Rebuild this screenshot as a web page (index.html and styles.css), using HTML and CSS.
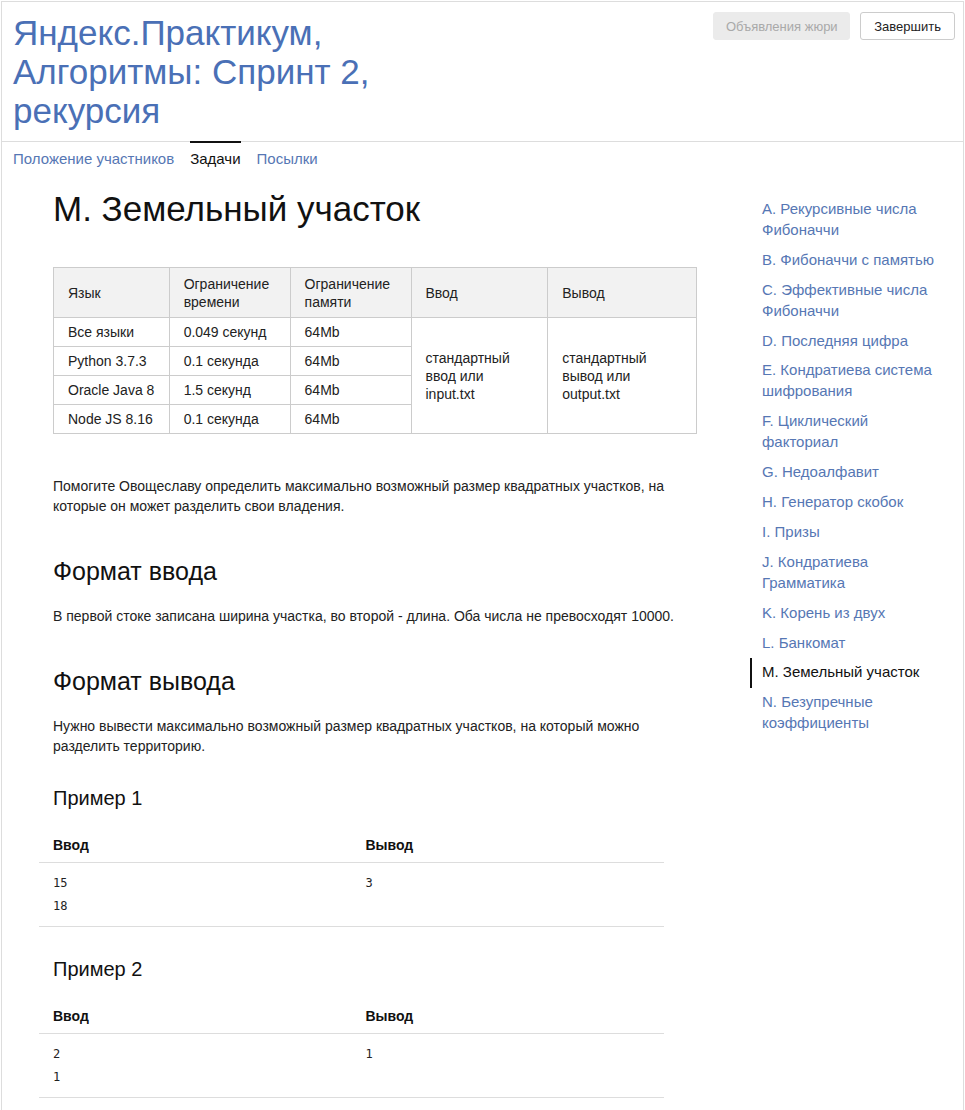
FILE: index.html
```html
<!DOCTYPE html>
<html lang="ru">
<head>
<meta charset="utf-8">
<title>М. Земельный участок</title>
<link rel="stylesheet" href="styles.css">
</head>
<body>
<div class="page">
  <header class="header">
    <h1 class="contest-title">Яндекс.Практикум, Алгоритмы: Спринт 2, рекурсия</h1>
    <div class="header-actions">
      <button class="btn btn-disabled" disabled>Объявления жюри</button>
      <button class="btn">Завершить</button>
    </div>
  </header>
  <nav class="tabs">
    <a class="tab">Положение участников</a>
    <a class="tab tab-active">Задачи</a>
    <a class="tab">Посылки</a>
  </nav>
  <div class="content">
    <main class="problem">
      <h1 class="problem-title">M. Земельный участок</h1>
      <table class="limits">
        <thead>
          <tr>
            <th class="c1">Язык</th>
            <th class="c2">Ограничение времени</th>
            <th class="c3">Ограничение памяти</th>
            <th class="c4">Ввод</th>
            <th class="c5">Вывод</th>
          </tr>
        </thead>
        <tbody>
          <tr>
            <td>Все языки</td>
            <td>0.049 секунд</td>
            <td>64Mb</td>
            <td rowspan="4">стандартный ввод или input.txt</td>
            <td rowspan="4">стандартный вывод или output.txt</td>
          </tr>
          <tr><td>Python 3.7.3</td><td>0.1 секунда</td><td>64Mb</td></tr>
          <tr><td>Oracle Java 8</td><td>1.5 секунд</td><td>64Mb</td></tr>
          <tr><td>Node JS 8.16</td><td>0.1 секунда</td><td>64Mb</td></tr>
        </tbody>
      </table>
      <p class="legend">Помогите Овощеславу определить максимально возможный размер квадратных участков, на которые он может разделить свои владения.</p>
      <h2 class="section-title">Формат ввода</h2>
      <p class="section-text">В первой стоке записана ширина участка, во второй - длина. Оба числа не превосходят 10000.</p>
      <h2 class="section-title">Формат вывода</h2>
      <p class="section-text">Нужно вывести максимально возможный размер квадратных участков, на который можно разделить территорию.</p>

      <h3 class="sample-title">Пример 1</h3>
      <table class="sample">
        <thead><tr><th>Ввод</th><th>Вывод</th></tr></thead>
        <tbody><tr><td><pre>15
18</pre></td><td><pre>3</pre></td></tr></tbody>
      </table>

      <h3 class="sample-title">Пример 2</h3>
      <table class="sample">
        <thead><tr><th>Ввод</th><th>Вывод</th></tr></thead>
        <tbody><tr><td><pre>2
1</pre></td><td><pre>1</pre></td></tr></tbody>
      </table>
    </main>
    <aside class="sidebar">
      <ul class="problem-list">
        <li class="problem-item"><a>A. Рекурсивные числа Фибоначчи</a></li>
        <li class="problem-item"><a>B. Фибоначчи с памятью</a></li>
        <li class="problem-item"><a>C. Эффективные числа Фибоначчи</a></li>
        <li class="problem-item"><a>D. Последняя цифра</a></li>
        <li class="problem-item"><a>E. Кондратиева система шифрования</a></li>
        <li class="problem-item"><a>F. Циклический факториал</a></li>
        <li class="problem-item"><a>G. Недоалфавит</a></li>
        <li class="problem-item"><a>H. Генератор скобок</a></li>
        <li class="problem-item"><a>I. Призы</a></li>
        <li class="problem-item"><a>J. Кондратиева Грамматика</a></li>
        <li class="problem-item"><a>K. Корень из двух</a></li>
        <li class="problem-item"><a>L. Банкомат</a></li>
        <li class="problem-item problem-item-active"><a>M. Земельный участок</a></li>
        <li class="problem-item"><a>N. Безупречные коэффициенты</a></li>
      </ul>
    </aside>
  </div>
</div>
</body>
</html>
```

FILE: styles.css
```css
* { box-sizing: border-box; }

html, body {
  margin: 0;
  padding: 0;
  background: #fff;
}

body {
  padding: 1px 1px 0 1px;
  font-family: "Liberation Sans", Arial, sans-serif;
  font-size: 14px;
  color: #1a1a1a;
}

.page {
  border: 1px solid #dddddd;
  border-bottom: none;
  min-height: 1120px;
}

.header {
  display: flex;
  justify-content: space-between;
  align-items: flex-start;
  padding: 11px 8px 11px 11px;
  border-bottom: 1px solid #dddddd;
}

.contest-title {
  margin: 0;
  max-width: 420px;
  font-size: 35px;
  line-height: 39px;
  font-weight: normal;
  color: #4a70b6;
}

.header-actions {
  display: flex;
  gap: 10px;
  margin-top: -1px;
}

.btn {
  height: 28px;
  padding: 0 13px;
  white-space: nowrap;
  font-family: "Liberation Sans", Arial, sans-serif;
  font-size: 13px;
  color: #222;
  background: #fff;
  border: 1px solid #cccccc;
  border-radius: 3px;
}

.btn-disabled {
  width: 137px;
  padding: 0;
  background: #ebebeb;
  border-color: #ebebeb;
  color: #a9a9a9;
}

.tabs {
  display: flex;
  gap: 16px;
  padding: 0 11px;
  margin-top: -1px;
}

.tab {
  padding: 6px 0 8px;
  line-height: 20px;
  font-size: 15px;
  color: #5677b4;
  border-top: 2px solid transparent;
}

.tab-active {
  color: #111;
  border-top-color: #111;
}

.content {
  display: grid;
  grid-template-columns: 644px 190px;
  column-gap: 53px;
  padding-left: 51px;
}

.problem {
  padding-top: 14px;
  padding-bottom: 40px;
}

.problem-title {
  margin: 0 0 40px;
  font-size: 35px;
  line-height: 36px;
  font-weight: normal;
  color: #111;
}

.limits {
  width: 644px;
  border-collapse: collapse;
  font-size: 14px;
  line-height: 18px;
  color: #222;
}

.limits th,
.limits td {
  border: 1px solid #cccccc;
  padding: 5px 14px;
  text-align: left;
  font-weight: normal;
  vertical-align: middle;
}

.limits th {
  background: #f2f2f2;
  padding-top: 7px;
  padding-bottom: 6px;
}

.limits .c1 { width: 116px; }
.limits .c2 { width: 121px; }
.limits .c3 { width: 121px; }
.limits .c4 { width: 137px; }
.limits .c5 { width: 149px; }

.legend {
  margin: 42px 0 0;
  line-height: 20px;
  color: #222;
}

.section-title {
  margin: 40px 0 0;
  font-size: 25px;
  line-height: 30px;
  font-weight: normal;
  color: #111;
}

.section-text {
  margin: 20px 0 0;
  line-height: 20px;
  color: #222;
}

.section-title + .section-text { margin-top: 20px; }
.section-text + .section-title { margin-top: 40px; }

.sample-title {
  margin: 29px 0 0;
  font-size: 20px;
  line-height: 26px;
  font-weight: normal;
  color: #111;
}

.sample {
  width: 625px;
  margin: 10px 0 0 -14px;
  border-collapse: collapse;
  table-layout: fixed;
}

.sample th,
.sample td {
  text-align: left;
  vertical-align: top;
  padding: 14px 14px 7px;
  border-bottom: 1px solid #dddddd;
}

.sample th {
  font-size: 14px;
  line-height: 20px;
  font-weight: bold;
  color: #111;
}

.sample td {
  padding: 9px 14px 8px;
}

.sample pre {
  margin: 0;
  font-family: "DejaVu Sans Mono", "Liberation Mono", monospace;
  font-size: 12px;
  line-height: 23px;
  color: #222;
}

.sidebar {
  padding-top: 18px;
}

.problem-list {
  list-style: none;
  margin: 0;
  padding: 0;
}

.problem-item {
  padding: 4px 0 5px 10px;
  line-height: 20.9px;
  font-size: 15px;
  color: #5677b4;
  border-left: 2px solid transparent;
}

.problem-item-active {
  border-left-color: #111;
  color: #111;
}
```
